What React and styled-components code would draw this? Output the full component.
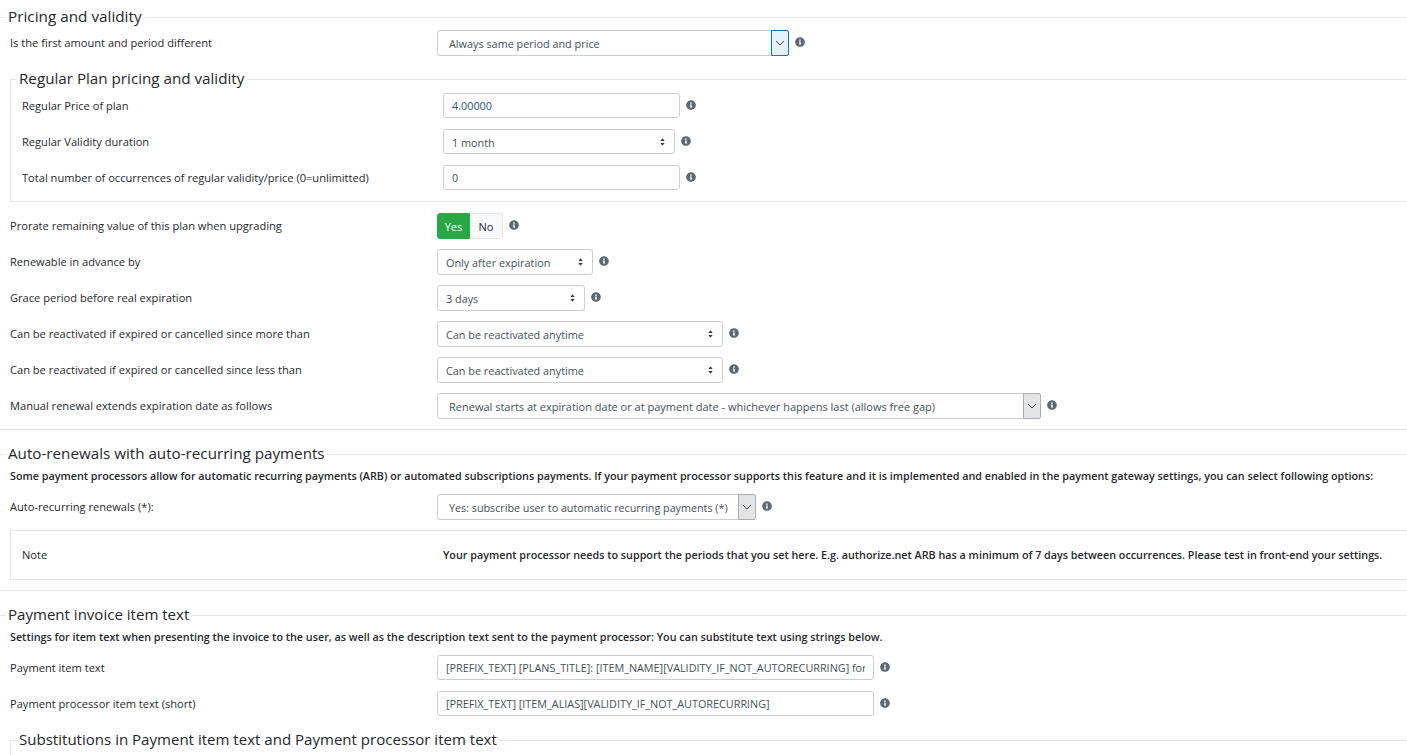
import React from "react";
import styled, { createGlobalStyle } from "styled-components";
import { FaInfoCircle } from "react-icons/fa";

const GlobalStyle = createGlobalStyle`
  html, body {
    margin: 0;
    padding: 0;
    background: #fff;
    overflow: hidden;
  }
  body {
    font-family: "Open Sans", "Liberation Sans", sans-serif;
    font-size: 11.1px;
    color: #23282c;
  }
`;

const Page = styled.div`
  width: 1407px;
  height: 755px;
  overflow: hidden;
`;

const Fieldset = styled.fieldset`
  margin: ${(p) => p.$margin || "0 0 16px"};
  padding: ${(p) => p.$padding || "0 0 5px 10px"};
  min-width: 0;
  border: 0;
  border-top: 1px solid #e4e7ea;
  border-bottom: 1px solid #e4e7ea;
  border-left: ${(p) => (p.$boxed ? "1px solid #e4e7ea" : "0")};
`;

const Legend = styled.legend`
  margin-left: ${(p) => p.$offset || "-4px"};
  padding: 0 2px;
  font-size: ${(p) => p.$size || 15.2}px;
  line-height: 16px;
  font-weight: 400;
  color: #23282c;
  transform: translateY(-1px);
`;

const Row = styled.div`
  display: flex;
  align-items: center;
  height: 36px;
`;

const Label = styled.div`
  flex: none;
  width: ${(p) => p.$width || "427px"};
  padding-bottom: 2px;
  white-space: nowrap;
`;

const Control = styled.div`
  display: flex;
  align-items: center;
`;

const Select = styled.div`
  display: flex;
  align-items: center;
  box-sizing: border-box;
  width: ${(p) => p.$width}px;
  height: ${(p) => p.$height || 26}px;
  margin-bottom: ${(p) => (p.$height ? 1 : 0)}px;
  padding-left: ${(p) => p.$inset || 8}px;
  border: 1px solid #c8ced3;
  border-radius: 3px;
  background: #fff;
  color: #3e515b;
  font-size: ${(p) => p.$size || 10.85}px;
  white-space: nowrap;
`;

const SelectText = styled.span`
  flex: 1;
  padding-top: 1px;
`;

const ChevronBox = styled.span`
  display: flex;
  align-items: center;
  justify-content: center;
  flex: none;
  box-sizing: border-box;
  width: 18px;
  height: 26px;
  margin-right: -1px;
  border: 1px solid ${(p) => (p.$focus ? "#0078d7" : "#a9adb0")};
  background: ${(p) => (p.$focus ? "#e5f1fb" : "#e3e4e5")};
  border-radius: 0 2px 2px 0;
`;

const SpinArrows = styled.svg`
  flex: none;
  width: 5px;
  height: 8px;
  margin-right: 9px;
`;

const TextInput = styled.input`
  display: block;
  box-sizing: border-box;
  width: ${(p) => p.$width}px;
  height: 25px;
  margin-bottom: 1px;
  padding: 0 8px;
  border: 1px solid #c8ced3;
  border-radius: 3px;
  background: #fff;
  font-family: inherit;
  font-size: 10.82px;
  color: ${(p) => p.$color || "#3e515b"};
  outline: none;
`;

const Info = styled(FaInfoCircle)`
  flex: none;
  width: 10px;
  height: 10px;
  margin: -3px 0 0 6px;
  color: #5c6873;
`;

const Toggle = styled.div`
  display: flex;
  height: 26px;
`;

const ToggleOption = styled.div`
  display: flex;
  align-items: center;
  justify-content: center;
  box-sizing: border-box;
  width: 33px;
  border: 1px solid ${(p) => (p.$on ? "#28a745" : "#e4e7ea")};
  border-left-width: ${(p) => (p.$on ? "1px" : "0")};
  border-radius: ${(p) => (p.$on ? "3px 0 0 3px" : "0 3px 3px 0")};
  background: ${(p) => (p.$on ? "#28a745" : "#f8f9fa")};
  color: ${(p) => (p.$on ? "#fff" : "#23282c")};
`;

const BoldLine = styled.div`
  font-size: 10.78px;
  font-weight: 600;
  line-height: 14px;
  padding: 7px 0 6px;
  white-space: nowrap;
`;

const NoteBox = styled.div`
  display: flex;
  align-items: center;
  height: 48px;
  margin: 5px 0 10px;
  padding-left: 11px;
  border: 1px solid #e4e7ea;
  border-right: 0;
`;

const NoteText = styled.div`
  padding-bottom: 2px;
  font-size: 10.78px;
  font-weight: 600;
  white-space: nowrap;
`;

function Chevron() {
  return (
    <svg width="10" height="6" viewBox="0 0 10 6" fill="none">
      <path d="M1 1l4 4 4-4" stroke="#444" strokeWidth="1" />
    </svg>
  );
}

function Spin() {
  return (
    <SpinArrows viewBox="0 0 6 9">
      <path d="M3 0l2.6 3.4H.4zM3 9L.4 5.6h5.2z" fill="#343a40" />
    </SpinArrows>
  );
}

function SpinSelect({ width, height, text }) {
  return (
    <Select $width={width} $height={height}>
      <SelectText>{text}</SelectText>
      <Spin />
    </Select>
  );
}

function NativeSelect({ width, size, text, focus }) {
  return (
    <Select $width={width} $inset={11} $size={size}>
      <SelectText>{text}</SelectText>
      <ChevronBox $focus={focus}>
        <Chevron />
      </ChevronBox>
    </Select>
  );
}

export default function App() {
  return (
    <Page>
      <GlobalStyle />
      <Fieldset $margin="9px 0 16px">
        <Legend $size={15.3}>Pricing and validity</Legend>
        <Row>
          <Label>Is the first amount and period different</Label>
          <Control>
            <NativeSelect width={352} text="Always same period and price" focus />
            <Info />
          </Control>
        </Row>

        <Fieldset $boxed $margin="10px 0 6px" $padding="1px 0 5px 11px">
          <Legend $offset="-5px">Regular Plan pricing and validity</Legend>
          <Row>
            <Label $width="421px">Regular Price of plan</Label>
            <Control>
              <TextInput $width={237} $color="#20528c" defaultValue="4.00000" />
              <Info />
            </Control>
          </Row>
          <Row>
            <Label $width="421px">Regular Validity duration</Label>
            <Control>
              <SpinSelect width={232} height={25} text="1 month" />
              <Info />
            </Control>
          </Row>
          <Row>
            <Label $width="421px">Total number of occurrences of regular validity/price (0=unlimitted)</Label>
            <Control>
              <TextInput $width={237} defaultValue="0" />
              <Info />
            </Control>
          </Row>
        </Fieldset>

        <Row>
          <Label>Prorate remaining value of this plan when upgrading</Label>
          <Control>
            <Toggle>
              <ToggleOption $on>Yes</ToggleOption>
              <ToggleOption>No</ToggleOption>
            </Toggle>
            <Info />
          </Control>
        </Row>
        <Row>
          <Label>Renewable in advance by</Label>
          <Control>
            <SpinSelect width={156} text="Only after expiration" />
            <Info />
          </Control>
        </Row>
        <Row>
          <Label>Grace period before real expiration</Label>
          <Control>
            <SpinSelect width={148} text="3 days" />
            <Info />
          </Control>
        </Row>
        <Row>
          <Label>Can be reactivated if expired or cancelled since more than</Label>
          <Control>
            <SpinSelect width={286} text="Can be reactivated anytime" />
            <Info />
          </Control>
        </Row>
        <Row>
          <Label>Can be reactivated if expired or cancelled since less than</Label>
          <Control>
            <SpinSelect width={286} text="Can be reactivated anytime" />
            <Info />
          </Control>
        </Row>
        <Row>
          <Label>Manual renewal extends expiration date as follows</Label>
          <Control>
            <NativeSelect width={604} size={11} text="Renewal starts at expiration date or at payment date - whichever happens last (allows free gap)" />
            <Info />
          </Control>
        </Row>
      </Fieldset>

      <Fieldset $padding="0 0 0 10px">
        <Legend>Auto-renewals with auto-recurring payments</Legend>
        <BoldLine>
          Some payment processors allow for automatic recurring payments (ARB) or automated subscriptions payments. If your payment processor supports this feature and it is implemented and enabled in the payment gateway settings, you can select following options:
        </BoldLine>
        <Row>
          <Label>Auto-recurring renewals (*):</Label>
          <Control>
            <NativeSelect width={319} size={10.75} text="Yes: subscribe user to automatic recurring payments (*)" />
            <Info />
          </Control>
        </Row>
        <NoteBox>
          <Label $width="421px">Note</Label>
          <NoteText>
            Your payment processor needs to support the periods that you set here. E.g. authorize.net ARB has a minimum of 7 days between occurrences. Please test in front-end your settings.
          </NoteText>
        </NoteBox>
      </Fieldset>

      <Fieldset $margin="0">
        <Legend $size={15.05}>Payment invoice item text</Legend>
        <BoldLine>
          Settings for item text when presenting the invoice to the user, as well as the description text sent to the payment processor: You can substitute text using strings below.
        </BoldLine>
        <Row>
          <Label>Payment item text</Label>
          <Control>
            <TextInput $width={437} defaultValue="[PREFIX_TEXT] [PLANS_TITLE]: [ITEM_NAME][VALIDITY_IF_NOT_AUTORECURRING] for" />
            <Info />
          </Control>
        </Row>
        <Row>
          <Label>Payment processor item text (short)</Label>
          <Control>
            <TextInput $width={437} defaultValue="[PREFIX_TEXT] [ITEM_ALIAS][VALIDITY_IF_NOT_AUTORECURRING]" />
            <Info />
          </Control>
        </Row>
        <Fieldset $boxed $margin="10px 0 0" $padding="1px 0 40px 11px">
          <Legend $offset="-5px" $size={15.05}>Substitutions in Payment item text and Payment processor item text</Legend>
        </Fieldset>
      </Fieldset>
    </Page>
  );
}
